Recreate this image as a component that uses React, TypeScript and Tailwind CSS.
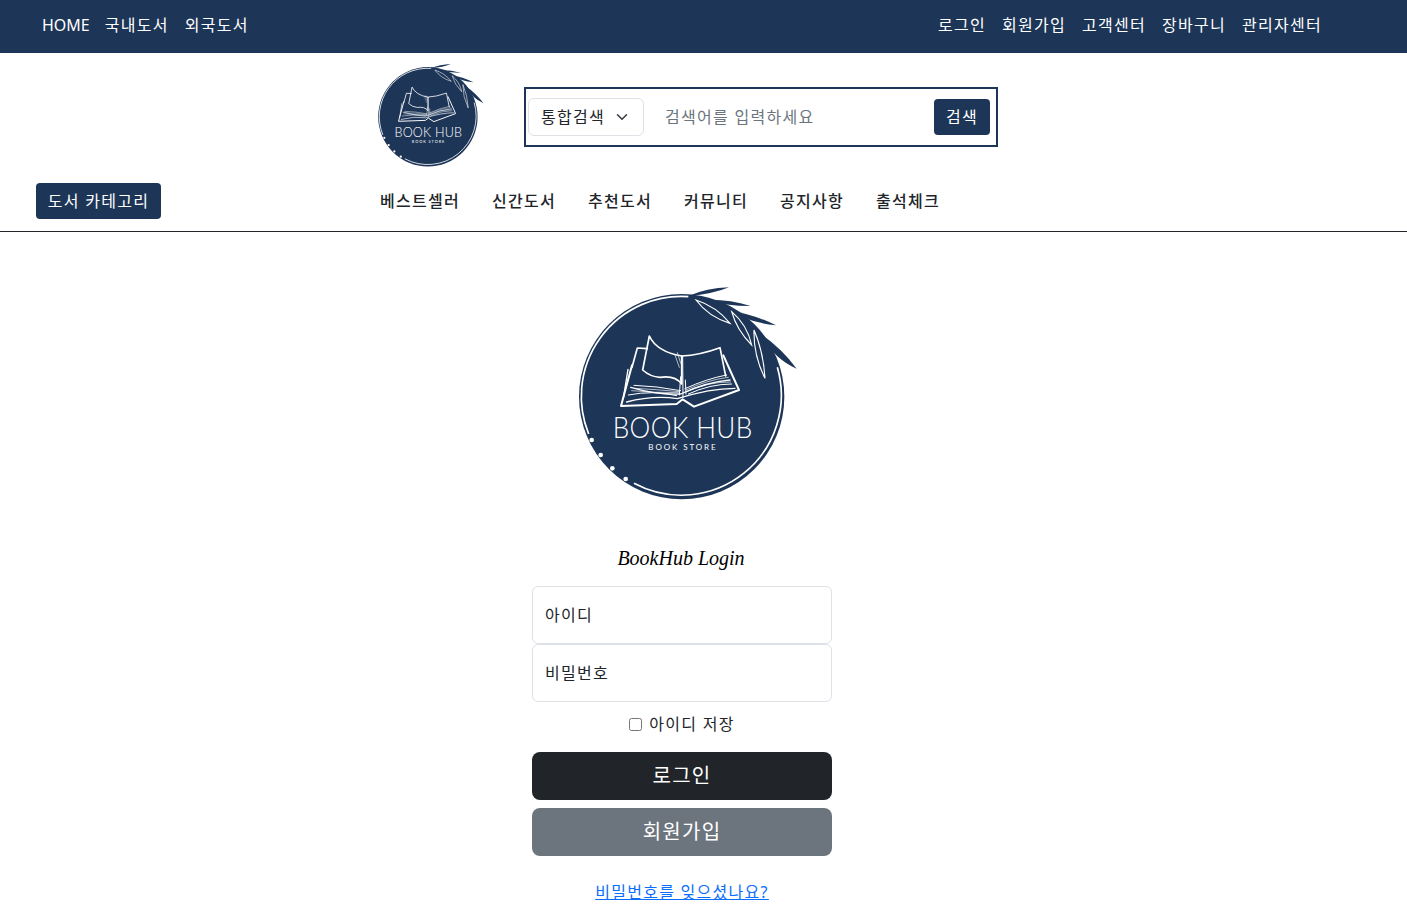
import React from 'react';

const navy = '#1d3557';
const font = { fontFamily: '"Noto Sans", "Noto Sans CJK KR", sans-serif' };

const Logo: React.FC<{ className: string }> = ({ className }) => (
  <svg viewBox="0 0 750 690" className={className}>
    <circle cx="365" cy="350" r="308" fill={navy} />
    <path d="M385 50A300 300 0 0 0 86 462" fill="none" stroke="#fff" strokeWidth="5" />
    <path d="M222 610A300 300 0 0 0 652 262" fill="none" stroke="#fff" strokeWidth="5" />
    <circle cx="95" cy="480" r="7" fill="#fff" />
    <circle cx="122" cy="525" r="7" fill="#fff" />
    <circle cx="157" cy="565" r="7" fill="#fff" />
    <circle cx="197" cy="597" r="7" fill="#fff" />
    {/* leaves */}
    <path d="M385 48Q440 24 507 22Q460 42 385 48Z" fill={navy} />
    <path d="M430 60Q500 56 572 78Q500 78 430 60Z" fill={navy} />
    <path d="M510 92Q580 102 648 136Q570 128 510 92Z" fill={navy} />
    <path d="M600 160Q665 205 710 266Q640 235 600 160Z" fill={navy} />
    <path d="M408 60Q470 80 510 130Q445 110 408 60Z" fill={navy} stroke="#fff" strokeWidth="3.5" />
    <path d="M515 95Q562 135 575 195Q530 150 515 95Z" fill={navy} stroke="#fff" strokeWidth="3.5" />
    <path d="M582 150Q610 215 615 295Q580 225 582 150Z" fill={navy} stroke="#fff" strokeWidth="3.5" />
    {/* book */}
    <g fill="none" stroke="#fff" strokeLinejoin="round" strokeLinecap="round">
      <path d="M268 168Q290 215 365 228L365 312Q345 285 300 292Q270 290 248 270Z" strokeWidth="5" />
      <path d="M365 228Q420 225 480 203L497 288" strokeWidth="5" />
      <path d="M262 206L232 204L216 262" strokeWidth="5" />
      <path d="M216 256L183 378L350 372L368 358L402 380L537 330L490 226" strokeWidth="6" />
      <path d="M204 268L190 355" strokeWidth="4" />
      <path d="M200 366Q280 345 352 356Q450 325 525 325" strokeWidth="4" />
      <path d="M212 322Q290 345 362 342Q440 306 510 300" strokeWidth="4" />
      <path d="M222 316Q290 318 362 332M375 326Q440 296 500 285" strokeWidth="3" />
      <path d="M205 345Q280 330 350 347M385 342Q450 312 515 312" strokeWidth="3" />
      <path d="M215 332Q280 338 355 338M382 334Q445 305 512 306" strokeWidth="2" />
      <path d="M225 325Q285 328 358 335M378 330Q440 300 505 292" strokeWidth="2" />
      <path d="M368 228L369 352M358 345L362 290M378 342L376 300" strokeWidth="3" />
      <path d="M345 225L358 262M352 218L362 250" strokeWidth="2" />
    </g>
    <text
      x="158"
      y="473"
      textLength="420"
      lengthAdjust="spacingAndGlyphs"
      fill="#fff"
      fontSize="88"
      style={{ fontFamily: '"Lato", sans-serif', fontWeight: 300 }}
    >
      BOOK HUB
    </text>
    <text
      x="265"
      y="511"
      textLength="203"
      fill="#fff"
      fontSize="24"
      style={{ fontFamily: '"Lato", sans-serif' }}
    >
      BOOK STORE
    </text>
  </svg>
);

const topLeft = ['국내도서', '외국도서'];
const topRight = ['로그인', '회원가입', '고객센터', '장바구니', '관리자센터'];
const menu = ['베스트셀러', '신간도서', '추천도서', '커뮤니티', '공지사항', '출석체크'];

const App: React.FC = () => {
  return (
    <div className="h-[906px] overflow-hidden bg-white text-base tracking-[0.08em] text-[#212529]" style={font}>
      <div className="flex h-[53px] items-center justify-between bg-[#1d3557] pb-[4px] pl-[42px] pr-[85px] text-white">
        <div className="flex gap-4">
          <a className="-mr-[1px] tracking-normal">HOME</a>
          {topLeft.map((t) => (
            <a key={t}>{t}</a>
          ))}
        </div>
        <div className="flex gap-4">
          {topRight.map((t) => (
            <a key={t}>{t}</a>
          ))}
        </div>
      </div>

      <div className="flex h-[128px] items-center pl-[369px]">
        <Logo className="-mt-[2px] h-[112px] w-[121px] shrink-0" />
        <div className="ml-[34px] flex h-[60px] w-[474px] items-center border-2 border-[#1d3557] pl-[2px] pr-[6px]">
          <button className="flex h-[38px] w-[116px] items-center justify-between rounded-md border border-[#dee2e6] pl-[12px] pr-[15px]">
            <span>통합검색</span>
            <svg viewBox="0 0 16 16" className="h-[12px] w-[12px]">
              <path d="M2 5l6 6 6-6" fill="none" stroke="#343a40" strokeWidth="2" strokeLinecap="round" strokeLinejoin="round" />
            </svg>
          </button>
          <input
            className="ml-[21px] min-w-0 flex-1 outline-none placeholder:text-[#6c757d]"
            placeholder="검색어를 입력하세요"
          />
          <button className="h-[36px] w-[56px] rounded bg-[#1d3557] text-white">검색</button>
        </div>
      </div>

      <div className="flex h-[51px] border-b border-[#212529] pl-[36px] pt-[2px]">
        <button className="h-[36px] w-[125px] rounded bg-[#1d3557] text-white">도서 카테고리</button>
        <div className="ml-[219px] flex h-[36px] items-center gap-8 font-medium">
          {menu.map((t) => (
            <a key={t}>{t}</a>
          ))}
        </div>
      </div>

      <div className="flex flex-col items-center pr-[43px] pt-[48px]">
        <Logo className="h-[230px] w-[250px] translate-x-[3px]" />
        <h1
          className="-ml-[2px] mt-[33px] h-[30px] text-[20px] italic leading-[30px] tracking-normal text-black"
          style={{ fontFamily: '"Liberation Serif", serif' }}
        >
          BookHub Login
        </h1>
        <div className="mt-[13px] flex w-[300px] flex-col">
          <input
            className="h-[58px] rounded-md border border-[#dee2e6] px-[12px] outline-none placeholder:text-[#212529]"
            placeholder="아이디"
          />
          <input
            type="password"
            className="h-[58px] rounded-md border border-[#dee2e6] px-[12px] outline-none placeholder:text-[#212529]"
            placeholder="비밀번호"
          />
          <label className="mt-[10px] flex h-6 items-center justify-center gap-[7px]">
            <input type="checkbox" className="h-[13px] w-[13px]" />
            아이디 저장
          </label>
          <button className="mt-[16px] h-[48px] rounded-lg bg-[#212529] text-[20px] text-white">로그인</button>
          <button className="mt-2 h-[48px] rounded-lg bg-[#6c757d] text-[20px] text-white">회원가입</button>
          <a className="mt-[24px] text-center text-[#0d6efd] underline">비밀번호를 잊으셨나요?</a>
        </div>
      </div>
    </div>
  );
};

export default App;
